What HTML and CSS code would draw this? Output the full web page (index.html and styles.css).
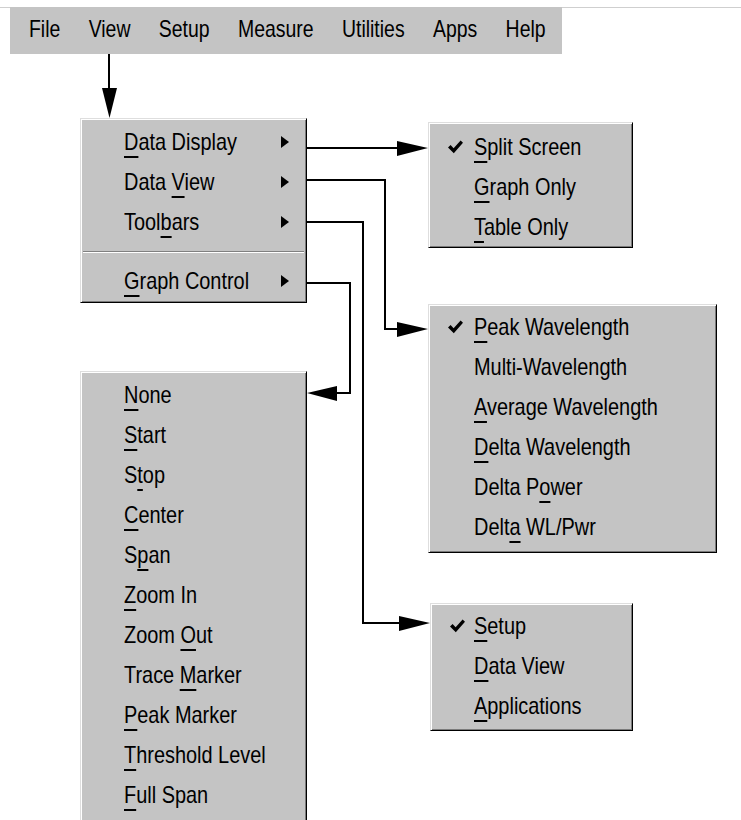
FILE: index.html
```html
<!DOCTYPE html>
<html lang="en">
<head>
    <meta charset="UTF-8">
    <meta name="viewport" content="width=device-width, initial-scale=1.0">
    <title>View Menu</title>
    <link rel="stylesheet" href="styles.css">
</head>
<body>

    <div class="window">
        <div class="menubar">
            <div class="menubar-items">
                <span>File</span>
                <span>View</span>
                <span>Setup</span>
                <span>Measure</span>
                <span>Utilities</span>
                <span>Apps</span>
                <span>Help</span>
            </div>
        </div>
    </div>

    <div class="diagram">
        <svg class="links" width="741" height="820" viewBox="0 0 741 820">
            <g fill="none" stroke="#000" stroke-width="2">
                <line x1="109" y1="54" x2="109" y2="92"/>
                <line x1="307" y1="148" x2="400" y2="148"/>
                <polyline points="307,180 385,180 385,329 400,329"/>
                <polyline points="307,222 363,222 363,623 402,623"/>
                <polyline points="307,283 350,283 350,393 335,393"/>
            </g>
            <g fill="#000">
                <polygon points="102,88 117,88 109.5,118"/>
                <polygon points="397,141 397,156 428,148"/>
                <polygon points="397,322 397,337 428,329"/>
                <polygon points="399,616 399,631 430,623"/>
                <polygon points="337,386 337,401 307,393"/>
            </g>
        </svg>

        <div class="menu menu-view">
            <div class="item sub"><span class="label"><u>D</u>ata Display</span></div>
            <div class="item sub"><span class="label">Data <u>V</u>iew</span></div>
            <div class="item sub"><span class="label">Tool<u>b</u>ars</span></div>
            <div class="sep"></div>
            <div class="item sub"><span class="label"><u>G</u>raph Control</span></div>
        </div>

        <div class="menu menu-display">
            <div class="item"><span class="check"><svg width="15" height="14" viewBox="0 0 15 14"><path d="M0 7.5 L2.6 5 L5.6 8.2 L12.6 0.5 L15 2.8 L5.8 13.2 Z"/></svg></span><span class="label"><u>S</u>plit Screen</span></div>
            <div class="item"><span class="label"><u>G</u>raph Only</span></div>
            <div class="item"><span class="label"><u>T</u>able Only</span></div>
        </div>

        <div class="menu menu-dataview">
            <div class="item"><span class="check"><svg width="15" height="14" viewBox="0 0 15 14"><path d="M0 7.5 L2.6 5 L5.6 8.2 L12.6 0.5 L15 2.8 L5.8 13.2 Z"/></svg></span><span class="label"><u>P</u>eak Wavelength</span></div>
            <div class="item"><span class="label">Multi-Wavelength</span></div>
            <div class="item"><span class="label"><u>A</u>verage Wavelength</span></div>
            <div class="item"><span class="label"><u>D</u>elta Wavelength</span></div>
            <div class="item"><span class="label">Delta P<u>o</u>wer</span></div>
            <div class="item"><span class="label">Delt<u>a</u> WL/Pwr</span></div>
        </div>

        <div class="menu menu-toolbars">
            <div class="item"><span class="check"><svg width="15" height="14" viewBox="0 0 15 14"><path d="M0 7.5 L2.6 5 L5.6 8.2 L12.6 0.5 L15 2.8 L5.8 13.2 Z"/></svg></span><span class="label"><u>S</u>etup</span></div>
            <div class="item"><span class="label"><u>D</u>ata View</span></div>
            <div class="item"><span class="label"><u>A</u>pplications</span></div>
        </div>

        <div class="menu menu-graph">
            <div class="item"><span class="label"><u>N</u>one</span></div>
            <div class="item"><span class="label"><u>S</u>tart</span></div>
            <div class="item"><span class="label">S<u>t</u>op</span></div>
            <div class="item"><span class="label"><u>C</u>enter</span></div>
            <div class="item"><span class="label">S<u>p</u>an</span></div>
            <div class="item"><span class="label"><u>Z</u>oom In</span></div>
            <div class="item"><span class="label">Zoom <u>O</u>ut</span></div>
            <div class="item"><span class="label">Trace <u>M</u>arker</span></div>
            <div class="item"><span class="label"><u>P</u>eak Marker</span></div>
            <div class="item"><span class="label"><u>T</u>hreshold Level</span></div>
            <div class="item"><span class="label"><u>F</u>ull Span</span></div>
        </div>
    </div>

</body>
</html>
```

FILE: styles.css
```css
* {
    margin: 0; padding: 0;
    box-sizing: border-box;
}
html, body { overflow: hidden; }
body {
    width: 741px;
    height: 820px;
    background: white;
    color: #000;
    font-family: 'Liberation Sans', Arial, sans-serif;
    font-size: 24px;
    position: relative;
}
.window {
    margin-top: 7px;
    border-top: 1px solid #cfcfcf;
    padding-left: 10px;
}
.menubar {
    width: 552px;
    height: 47px;
    margin-top: -1px;
    padding: 0 0 4px 19px;
    display: flex;
    align-items: center;
    background: #c4c4c4;
}
.menubar-items {
    display: flex;
    gap: 35px;
    transform: scaleX(0.81);
    transform-origin: left center;
}
.diagram {
    position: absolute;
    left: 0; top: 0;
    width: 741px;
    height: 820px;
}
.links {
    position: absolute;
    left: 0; top: 0;
}
.menu {
    position: absolute;
    background: #c4c4c4;
    border: 1px solid;
    border-color: #dedede #000 #000 #dedede;
    box-shadow: inset 1px 1px #fff, inset -1px -1px #7a7a7a;
    padding: 3px 2px 4px;
}
.menu-view { left: 80px; top: 118px; width: 227px; padding-bottom: 1px; }
.menu-display { left: 428px; top: 122px; width: 205px; padding-top: 4px; padding-bottom: 0; }
.menu-dataview { left: 428px; top: 304px; width: 289px; padding-top: 2px; padding-bottom: 5px; }
.menu-toolbars { left: 430px; top: 603px; width: 203px; padding-top: 2px; }
.menu-graph { left: 80px; top: 371px; width: 227px; height: 460px; }
.item {
    position: relative;
    display: flex;
    align-items: center;
    height: 40px;
    padding-left: 41px;
    white-space: nowrap;
}
.menu-display .item, .menu-dataview .item { padding-left: 43px; }
.label {
    display: inline-block;
    transform: scaleX(0.83);
    transform-origin: left center;
}
.label u {
    text-decoration-thickness: 2px;
    text-underline-offset: 6px;
}
.sub::after {
    content: "";
    position: absolute;
    right: 15px;
    top: 14px;
    border-left: 8px solid #000;
    border-top: 6px solid transparent;
    border-bottom: 6px solid transparent;
}
.check {
    position: absolute;
    left: 17px;
    top: 13px;
    display: flex;
}
.sep {
    height: 19px;
    display: flex;
    align-items: center;
}
.sep::before {
    content: "";
    flex: 1;
    border-top: 1px solid #808080;
    border-bottom: 1px solid #fff;
}
```
